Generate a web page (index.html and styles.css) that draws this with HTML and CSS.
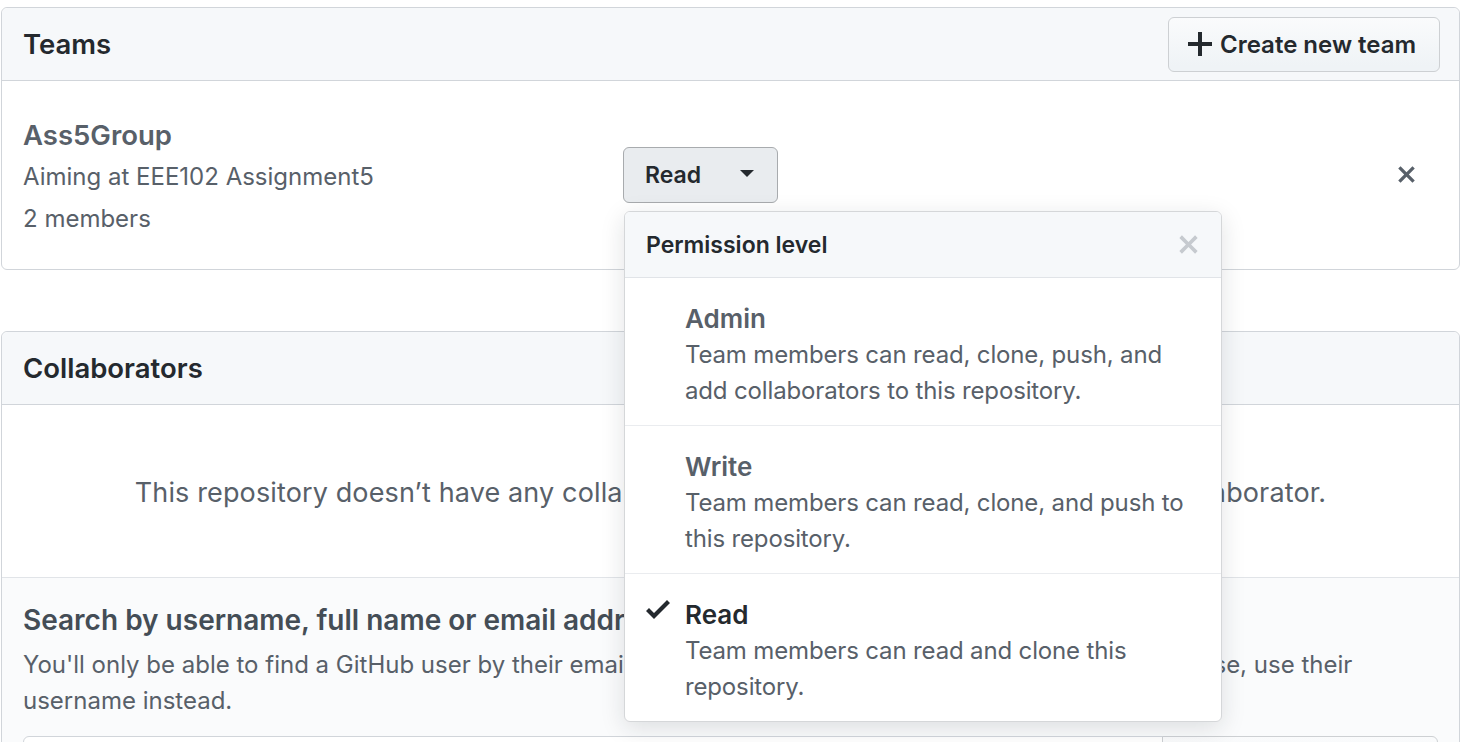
FILE: index.html
```html
<!DOCTYPE html>
<html lang="en">
<head>
<meta charset="utf-8">
<title>Collaborators &amp; teams</title>
<link rel="stylesheet" href="styles.css">
</head>
<body>
<div class="page">
  <section class="box teams">
    <div class="box-header">
      <h3 class="box-title">Teams</h3>
      <button class="btn btn-create" type="button">
        <svg class="icon-plus" viewBox="0 0 12 12" width="24" height="24" aria-hidden="true"><path d="M12 7H7v5H5V7H0V5h5V0h2v5h5v2z"/></svg>
        <span>Create new team</span>
      </button>
    </div>
    <div class="team-row">
      <div class="team-info">
        <div class="team-name">Ass5Group</div>
        <div class="team-desc">Aiming at EEE102 Assignment5</div>
        <div class="team-desc">2 members</div>
      </div>
      <div class="perm">
        <button class="btn btn-select" type="button">
          <span>Read</span>
          <span class="caret"></span>
        </button>
        <div class="menu">
          <div class="menu-header">
            <span class="menu-title">Permission level</span>
            <svg class="menu-close" viewBox="0 0 12 12" width="21" height="21" aria-hidden="true"><path d="M7.48 6l3.75 3.75-1.48 1.48L6 7.48l-3.75 3.75-1.48-1.48L4.52 6 .77 2.25l1.48-1.48L6 4.52 9.750.77l1.48 1.48L7.48 6z"/></svg>
          </div>
          <div class="menu-item">
            <div class="item-title">Admin</div>
            <div class="item-desc">Team members can read, clone, push, and add collaborators to this repository.</div>
          </div>
          <div class="menu-item">
            <div class="item-title">Write</div>
            <div class="item-desc">Team members can read, clone, and push to this repository.</div>
          </div>
          <div class="menu-item selected">
            <svg class="check" viewBox="0 0 12 9.5" width="24" height="19" aria-hidden="true"><path d="M12 1.5l-8 8-4-4L1.5 4 4 6.5 10.5 0 12 1.5z"/></svg>
            <div class="item-title">Read</div>
            <div class="item-desc">Team members can read and clone this repository.</div>
          </div>
        </div>
      </div>
      <button class="remove" type="button" aria-label="Remove team">
        <svg viewBox="0 0 12 12" width="19" height="19" aria-hidden="true"><path d="M7.48 6l3.75 3.75-1.48 1.48L6 7.48l-3.75 3.75-1.48-1.48L4.52 6 .77 2.25l1.48-1.48L6 4.52 9.75.77l1.48 1.48L7.48 6z"/></svg>
      </button>
    </div>
  </section>

  <section class="box collab">
    <div class="box-header">
      <h3 class="box-title">Collaborators</h3>
    </div>
    <div class="blank">This repository doesn’t have any collaborators yet. Use the form below to add a collaborator.</div>
    <div class="search">
      <h4 class="search-title">Search by username, full name or email address</h4>
      <p class="search-note">You'll only be able to find a GitHub user by their email address if they've chosen to list it publicly. Otherwise, use their username instead.</p>
      <div class="add-row">
        <input class="input" type="text" aria-label="Search by username, full name or email address">
        <button class="btn btn-add" type="button">Add collaborator</button>
      </div>
    </div>
  </section>
</div>
</body>
</html>
```

FILE: styles.css
```css
* { box-sizing: border-box; }

html, body {
  margin: 0;
  padding: 0;
  background: #fff;
}

body {
  font-family: Inter, "Noto Sans", "Liberation Sans", sans-serif;
  color: #24292e;
  overflow: hidden;
}

.page {
  padding: 7px 0 0 1px;
  width: 1460px;
}

.box {
  border: 1px solid #d1d5da;
  border-radius: 6px;
  background: #fff;
}

.box-header {
  height: 73px;
  display: flex;
  align-items: center;
  justify-content: space-between;
  padding: 0 19px 0 21px;
  background: #f6f8fa;
  border-bottom: 1px solid #d1d5da;
  border-radius: 6px 6px 0 0;
}

.box-title {
  margin: 0;
  font-size: 27.5px;
  font-weight: 600;
  color: #24292e;
}

.btn {
  font-family: inherit;
  font-weight: 600;
  color: #24292e;
  border: 1px solid #cdd0d3;
  border-radius: 6px;
  background: linear-gradient(#fafbfc, #eff3f6 90%);
  cursor: pointer;
}

.btn-create {
  height: 55px;
  width: 272px;
  display: flex;
  align-items: center;
  gap: 8px;
  padding: 0 0 0 19px;
  font-size: 24px;
}

.icon-plus { fill: #24292e; flex: none; }

.team-row {
  display: flex;
  align-items: flex-start;
  padding: 33px 43px 29px 21px;
}

.team-info {
  width: 600px;
  flex: none;
}

.team-name {
  font-size: 27.5px;
  font-weight: 600;
  line-height: 42px;
  color: #586069;
}

.team-desc {
  font-size: 24px;
  line-height: 42px;
  color: #586069;
}

.perm {
  position: relative;
  flex: none;
  margin-top: 33px;
}

.btn-select {
  width: 155px;
  height: 56px;
  display: flex;
  align-items: center;
  justify-content: space-between;
  padding: 0 23px 0 21px;
  font-size: 23px;
  background: #e9ecef;
  border-color: #a8abae;
}

.caret {
  width: 0;
  height: 0;
  border-left: 7px solid transparent;
  border-right: 7px solid transparent;
  border-top: 7px solid #24292e;
  margin-top: -3px;
}

.remove {
  margin-left: auto;
  margin-top: 51px;
  padding: 0;
  border: 0;
  background: none;
  display: flex;
  fill: #586069;
}

.menu {
  position: absolute;
  left: 1px;
  top: 64px;
  width: 598px;
  background: #fff;
  border: 1px solid #d5d7d9;
  border-radius: 6px;
  box-shadow: 0 6px 24px rgba(27, 31, 35, 0.13);
  z-index: 10;
  overflow: hidden;
}

.menu-header {
  height: 66px;
  display: flex;
  align-items: center;
  justify-content: space-between;
  padding: 0 22px 0 21px;
  background: #f6f8fa;
  border-bottom: 1px solid #e1e4e8;
}

.menu-title {
  font-size: 23px;
  font-weight: 600;
  color: #24292e;
}

.menu-close { fill: #c6cacf; }

.menu-item {
  position: relative;
  padding: 22px 24px 16px 60px;
  border-bottom: 1px solid #eaecef;
}

.menu-item:last-child { border-bottom: 0; }

.item-title {
  font-size: 26px;
  font-weight: 600;
  line-height: 37px;
  color: #586069;
}

.menu-item.selected .item-title { color: #24292e; }

.item-desc {
  font-size: 24px;
  line-height: 36px;
  letter-spacing: -0.15px;
  color: #586069;
}

.check {
  position: absolute;
  left: 21px;
  top: 26px;
  fill: #24292e;
}

.collab {
  margin-top: 61px;
}

.blank {
  height: 173px;
  display: flex;
  align-items: center;
  justify-content: center;
  padding-top: 3px;
  font-size: 27px;
  letter-spacing: 0.13px;
  color: #586069;
  border-bottom: 1px solid #e1e4e8;
}

.search {
  background: #fafbfc;
  padding: 24px 21px 40px 21px;
}

.search-title {
  margin: 0;
  font-size: 28px;
  font-weight: 600;
  line-height: 36px;
  color: #444d56;
}

.search-note {
  margin: 9px 0 0 0;
  font-size: 24px;
  line-height: 36px;
  color: #586069;
  max-width: 1340px;
}

.add-row {
  display: flex;
  margin-top: 17px;
}

.input {
  flex: 1;
  height: 60px;
  border: 1px solid #d1d5da;
  border-radius: 6px 0 0 6px;
  background: #fff;
}

.btn-add {
  width: 276px;
  height: 60px;
  font-size: 24px;
  border-radius: 0 6px 6px 0;
  margin-left: -1px;
}
```
